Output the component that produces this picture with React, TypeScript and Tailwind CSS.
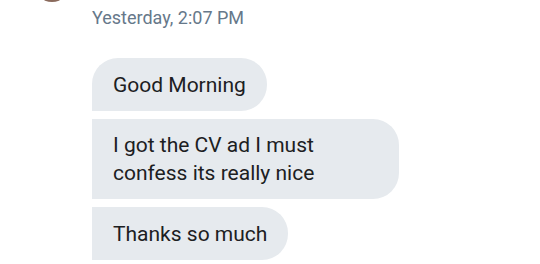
export default function App() {
  return (
    <div className="relative h-[264px] w-[540px] overflow-hidden bg-white font-['Roboto',sans-serif]">
      {/* avatar, mostly scrolled out of view */}
      <div className="absolute left-[34px] top-[-34px] h-9 w-9 rounded-full bg-[#8a6a5c]" />

      <div className="flex flex-col items-start pl-[92px] pt-[6px]">
        <div className="text-[18px] leading-6 text-[#66788a]">Yesterday, 2:07 PM</div>

        <div className="mt-[28px] flex flex-col items-start gap-[8px]">
          <div className="rounded-[26px] rounded-bl-none bg-[#e6eaee] px-[21px] py-[12.5px] text-[21px] leading-[28px] text-[#1c2022]">
            Good Morning
          </div>
          <div className="w-[307px] rounded-[26px] rounded-l-none bg-[#e6eaee] px-[21px] py-[12px] text-[21px] leading-[28px] text-[#1c2022]">
            I got the CV ad I must confess its really nice
          </div>
          <div className="rounded-[26px] rounded-l-none bg-[#e6eaee] px-[21px] py-[12.5px] text-[21px] leading-[28px] text-[#1c2022]">
            Thanks so much
          </div>
        </div>
      </div>
    </div>
  );
}
